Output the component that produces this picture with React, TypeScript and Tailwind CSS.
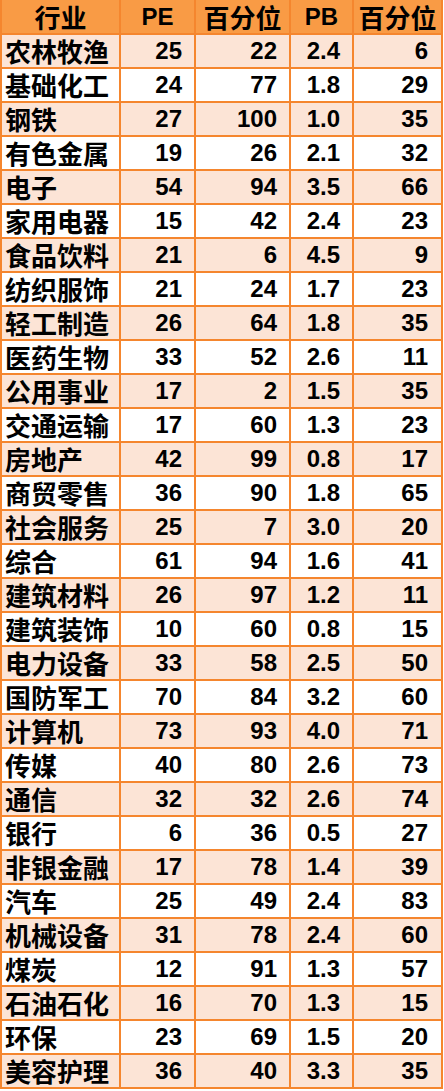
import React from "react";

const rows: [string, number, number, string, number][] = [
  ["农林牧渔", 25, 22, "2.4", 6],
  ["基础化工", 24, 77, "1.8", 29],
  ["钢铁", 27, 100, "1.0", 35],
  ["有色金属", 19, 26, "2.1", 32],
  ["电子", 54, 94, "3.5", 66],
  ["家用电器", 15, 42, "2.4", 23],
  ["食品饮料", 21, 6, "4.5", 9],
  ["纺织服饰", 21, 24, "1.7", 23],
  ["轻工制造", 26, 64, "1.8", 35],
  ["医药生物", 33, 52, "2.6", 11],
  ["公用事业", 17, 2, "1.5", 35],
  ["交通运输", 17, 60, "1.3", 23],
  ["房地产", 42, 99, "0.8", 17],
  ["商贸零售", 36, 90, "1.8", 65],
  ["社会服务", 25, 7, "3.0", 20],
  ["综合", 61, 94, "1.6", 41],
  ["建筑材料", 26, 97, "1.2", 11],
  ["建筑装饰", 10, 60, "0.8", 15],
  ["电力设备", 33, 58, "2.5", 50],
  ["国防军工", 70, 84, "3.2", 60],
  ["计算机", 73, 93, "4.0", 71],
  ["传媒", 40, 80, "2.6", 73],
  ["通信", 32, 32, "2.6", 74],
  ["银行", 6, 36, "0.5", 27],
  ["非银金融", 17, 78, "1.4", 39],
  ["汽车", 25, 49, "2.4", 83],
  ["机械设备", 31, 78, "2.4", 60],
  ["煤炭", 12, 91, "1.3", 57],
  ["石油石化", 16, 70, "1.3", 15],
  ["环保", 23, 69, "1.5", 20],
  ["美容护理", 36, 40, "3.3", 35],
];

const cjk = "font-['Noto_Sans_CJK_SC',sans-serif] font-bold text-[26px] leading-[30px]";
const num = "font-['Liberation_Sans',Arial,sans-serif] font-bold text-[24px] leading-[28px]";

export default function App() {
  return (
    <div className="w-[444px] h-[1091px] bg-white text-black">
      <div className="w-[443px] flex flex-col border-l-2 border-[#F5862E]">
        <div className="flex h-[35px] bg-[#F99B45] border-b-2 border-[#F5862E]">
          <div className={`w-[119px] border-r-2 border-[#F5862E] flex items-center justify-center ${cjk}`}>行业</div>
          <div className={`w-[75px] border-r-2 border-[#F5862E] flex items-center justify-center ${num}`}>PE</div>
          <div className={`w-[95px] border-r-2 border-[#F5862E] flex items-center justify-center ${cjk}`}>百分位</div>
          <div className={`w-[63px] border-r-2 border-[#F5862E] flex items-center justify-center ${num}`}>PB</div>
          <div className={`w-[89px] border-r-2 border-[#F5862E] flex items-center justify-center ${cjk}`}>百分位</div>
        </div>
        {rows.map((r, i) => (
          <div
            key={r[0]}
            className={`flex h-[34px] border-b-2 border-[#F5862E] ${i % 2 === 0 ? "bg-[#FCE4D6]" : "bg-white"}`}
          >
            <div className={`w-[119px] border-r-2 border-[#F5862E] flex items-center pl-[3px] ${cjk}`}>{r[0]}</div>
            <div className={`w-[75px] border-r-2 border-[#F5862E] flex items-center justify-end pr-[12px] ${num}`}>{r[1]}</div>
            <div className={`w-[95px] border-r-2 border-[#F5862E] flex items-center justify-end pr-[12px] ${num}`}>{r[2]}</div>
            <div className={`w-[63px] border-r-2 border-[#F5862E] flex items-center justify-end pr-[12px] ${num}`}>{r[3]}</div>
            <div className={`w-[89px] border-r-2 border-[#F5862E] flex items-center justify-end pr-[13px] ${num}`}>{r[4]}</div>
          </div>
        ))}
      </div>
    </div>
  );
}
